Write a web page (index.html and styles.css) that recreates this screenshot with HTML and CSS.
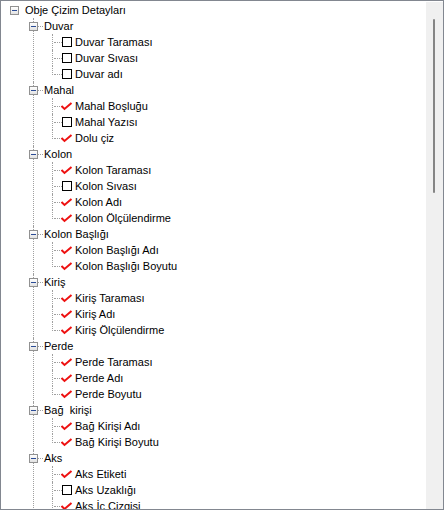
FILE: index.html
```html
<!DOCTYPE html>
<html lang="tr">
<head>
    <meta charset="UTF-8">
    <meta name="viewport" content="width=device-width, initial-scale=1.0">
    <title>Obje Çizim Detayları</title>
    <link rel="stylesheet" href="styles.css">
</head>
<body>
    <div class="tree-window">
        <div class="tree">
            <ul>
                <li>
                    <div class="row"><span class="expander"></span><span class="label">Obje Çizim Detayları</span></div>
                    <ul class="children">
                        <li>
                            <div class="row"><span class="expander"></span><span class="label">Duvar</span></div>
                            <ul class="children">
                                <li><div class="row leaf"><span class="state"><span class="box"></span></span><span class="label">Duvar Taraması</span></div></li>
                                <li><div class="row leaf"><span class="state"><span class="box"></span></span><span class="label">Duvar Sıvası</span></div></li>
                                <li class="last"><div class="row leaf"><span class="state"><span class="box"></span></span><span class="label">Duvar adı</span></div></li>
                            </ul>
                        </li>
                        <li>
                            <div class="row"><span class="expander"></span><span class="label">Mahal</span></div>
                            <ul class="children">
                                <li><div class="row leaf"><span class="state"><svg class="check" viewBox="0 0 13 9"><polyline points="1.5,4 4.5,7 11.5,1"/></svg></span><span class="label">Mahal Boşluğu</span></div></li>
                                <li><div class="row leaf"><span class="state"><span class="box"></span></span><span class="label">Mahal Yazısı</span></div></li>
                                <li class="last"><div class="row leaf"><span class="state"><svg class="check" viewBox="0 0 13 9"><polyline points="1.5,4 4.5,7 11.5,1"/></svg></span><span class="label">Dolu çiz</span></div></li>
                            </ul>
                        </li>
                        <li>
                            <div class="row"><span class="expander"></span><span class="label">Kolon</span></div>
                            <ul class="children">
                                <li><div class="row leaf"><span class="state"><svg class="check" viewBox="0 0 13 9"><polyline points="1.5,4 4.5,7 11.5,1"/></svg></span><span class="label">Kolon Taraması</span></div></li>
                                <li><div class="row leaf"><span class="state"><span class="box"></span></span><span class="label">Kolon Sıvası</span></div></li>
                                <li><div class="row leaf"><span class="state"><svg class="check" viewBox="0 0 13 9"><polyline points="1.5,4 4.5,7 11.5,1"/></svg></span><span class="label">Kolon Adı</span></div></li>
                                <li class="last"><div class="row leaf"><span class="state"><svg class="check" viewBox="0 0 13 9"><polyline points="1.5,4 4.5,7 11.5,1"/></svg></span><span class="label">Kolon Ölçülendirme</span></div></li>
                            </ul>
                        </li>
                        <li>
                            <div class="row"><span class="expander"></span><span class="label">Kolon Başlığı</span></div>
                            <ul class="children">
                                <li><div class="row leaf"><span class="state"><svg class="check" viewBox="0 0 13 9"><polyline points="1.5,4 4.5,7 11.5,1"/></svg></span><span class="label">Kolon Başlığı Adı</span></div></li>
                                <li class="last"><div class="row leaf"><span class="state"><svg class="check" viewBox="0 0 13 9"><polyline points="1.5,4 4.5,7 11.5,1"/></svg></span><span class="label">Kolon Başlığı Boyutu</span></div></li>
                            </ul>
                        </li>
                        <li>
                            <div class="row"><span class="expander"></span><span class="label">Kiriş</span></div>
                            <ul class="children">
                                <li><div class="row leaf"><span class="state"><svg class="check" viewBox="0 0 13 9"><polyline points="1.5,4 4.5,7 11.5,1"/></svg></span><span class="label">Kiriş Taraması</span></div></li>
                                <li><div class="row leaf"><span class="state"><svg class="check" viewBox="0 0 13 9"><polyline points="1.5,4 4.5,7 11.5,1"/></svg></span><span class="label">Kiriş Adı</span></div></li>
                                <li class="last"><div class="row leaf"><span class="state"><svg class="check" viewBox="0 0 13 9"><polyline points="1.5,4 4.5,7 11.5,1"/></svg></span><span class="label">Kiriş Ölçülendirme</span></div></li>
                            </ul>
                        </li>
                        <li>
                            <div class="row"><span class="expander"></span><span class="label">Perde</span></div>
                            <ul class="children">
                                <li><div class="row leaf"><span class="state"><svg class="check" viewBox="0 0 13 9"><polyline points="1.5,4 4.5,7 11.5,1"/></svg></span><span class="label">Perde Taraması</span></div></li>
                                <li><div class="row leaf"><span class="state"><svg class="check" viewBox="0 0 13 9"><polyline points="1.5,4 4.5,7 11.5,1"/></svg></span><span class="label">Perde Adı</span></div></li>
                                <li class="last"><div class="row leaf"><span class="state"><svg class="check" viewBox="0 0 13 9"><polyline points="1.5,4 4.5,7 11.5,1"/></svg></span><span class="label">Perde Boyutu</span></div></li>
                            </ul>
                        </li>
                        <li>
                            <div class="row"><span class="expander"></span><span class="label">Bağ  kirişi</span></div>
                            <ul class="children">
                                <li><div class="row leaf"><span class="state"><svg class="check" viewBox="0 0 13 9"><polyline points="1.5,4 4.5,7 11.5,1"/></svg></span><span class="label">Bağ Kirişi Adı</span></div></li>
                                <li class="last"><div class="row leaf"><span class="state"><svg class="check" viewBox="0 0 13 9"><polyline points="1.5,4 4.5,7 11.5,1"/></svg></span><span class="label">Bağ Kirişi Boyutu</span></div></li>
                            </ul>
                        </li>
                        <li>
                            <div class="row"><span class="expander"></span><span class="label">Aks</span></div>
                            <ul class="children">
                                <li><div class="row leaf"><span class="state"><svg class="check" viewBox="0 0 13 9"><polyline points="1.5,4 4.5,7 11.5,1"/></svg></span><span class="label">Aks Etiketi</span></div></li>
                                <li><div class="row leaf"><span class="state"><span class="box"></span></span><span class="label">Aks Uzaklığı</span></div></li>
                                <li><div class="row leaf"><span class="state"><svg class="check" viewBox="0 0 13 9"><polyline points="1.5,4 4.5,7 11.5,1"/></svg></span><span class="label">Aks İç Çizgisi</span></div></li>
                            </ul>
                        </li>
                    </ul>
                </li>
            </ul>
        </div>
        <div class="scrollbar"><div class="thumb"></div></div>
    </div>
</body>
</html>
```

FILE: styles.css
```css
:root {
    --line: #a0a0a0;
    --frame: #828790;
    --tick: #ee1111;
}

* {
    margin: 0;
    padding: 0;
    box-sizing: border-box;
}

body {
    background: #fff;
    color: #000;
    font-family: 'Liberation Sans', Arial, sans-serif;
    font-size: 11px;
}

.tree-window {
    display: flex;
    width: 444px;
    height: 510px;
    border: 1px solid var(--frame);
    padding-top: 1px;
}

.tree {
    flex: 1;
    overflow: hidden;
    padding-left: 9px;
}

ul {
    list-style: none;
}

.children {
    padding-left: 19px;
}

li {
    position: relative;
}

/* dotted connector lines */
.children > li::before {
    content: '';
    position: absolute;
    left: 4px;
    top: 0;
    bottom: 0;
    border-left: 1px dotted var(--line);
}

.children > li.last::before {
    bottom: auto;
    height: 9px;
}

.children > li::after {
    content: '';
    position: absolute;
    left: 6px;
    top: 8px;
    width: 8px;
    border-top: 1px dotted var(--line);
}

.row {
    display: flex;
    align-items: center;
    height: 16px;
    line-height: 16px;
    white-space: pre;
    position: relative;
    z-index: 1;
}

.expander {
    flex: none;
    width: 9px;
    height: 9px;
    align-self: flex-start;
    margin-top: 4px;
    margin-right: 6px;
    border: 1px solid #919191;
    background: linear-gradient(#ffffff, #e2e2e2);
    position: relative;
}

.expander::after {
    content: '';
    position: absolute;
    left: 1px;
    top: 3px;
    width: 5px;
    height: 1px;
    background: #2b4c96;
}

.leaf {
    padding-left: 14px;
}

.state {
    flex: none;
    width: 13px;
    height: 16px;
    display: flex;
    align-items: center;
}

.box {
    width: 10px;
    height: 10px;
    border: 1px solid #000;
    background: #fff;
}

.check {
    width: 13px;
    height: 9px;
    margin-left: -2px;
    margin-top: 1px;
    fill: none;
    stroke: var(--tick);
    stroke-width: 2;
}

.label {
    margin-left: 0;
}

.scrollbar {
    flex: none;
    width: 17px;
    background: #f0f0f0;
}

.thumb {
    width: 2px;
    height: 174px;
    margin: 17px 0 0 7px;
    border-radius: 1px;
    background: #858585;
}
```
